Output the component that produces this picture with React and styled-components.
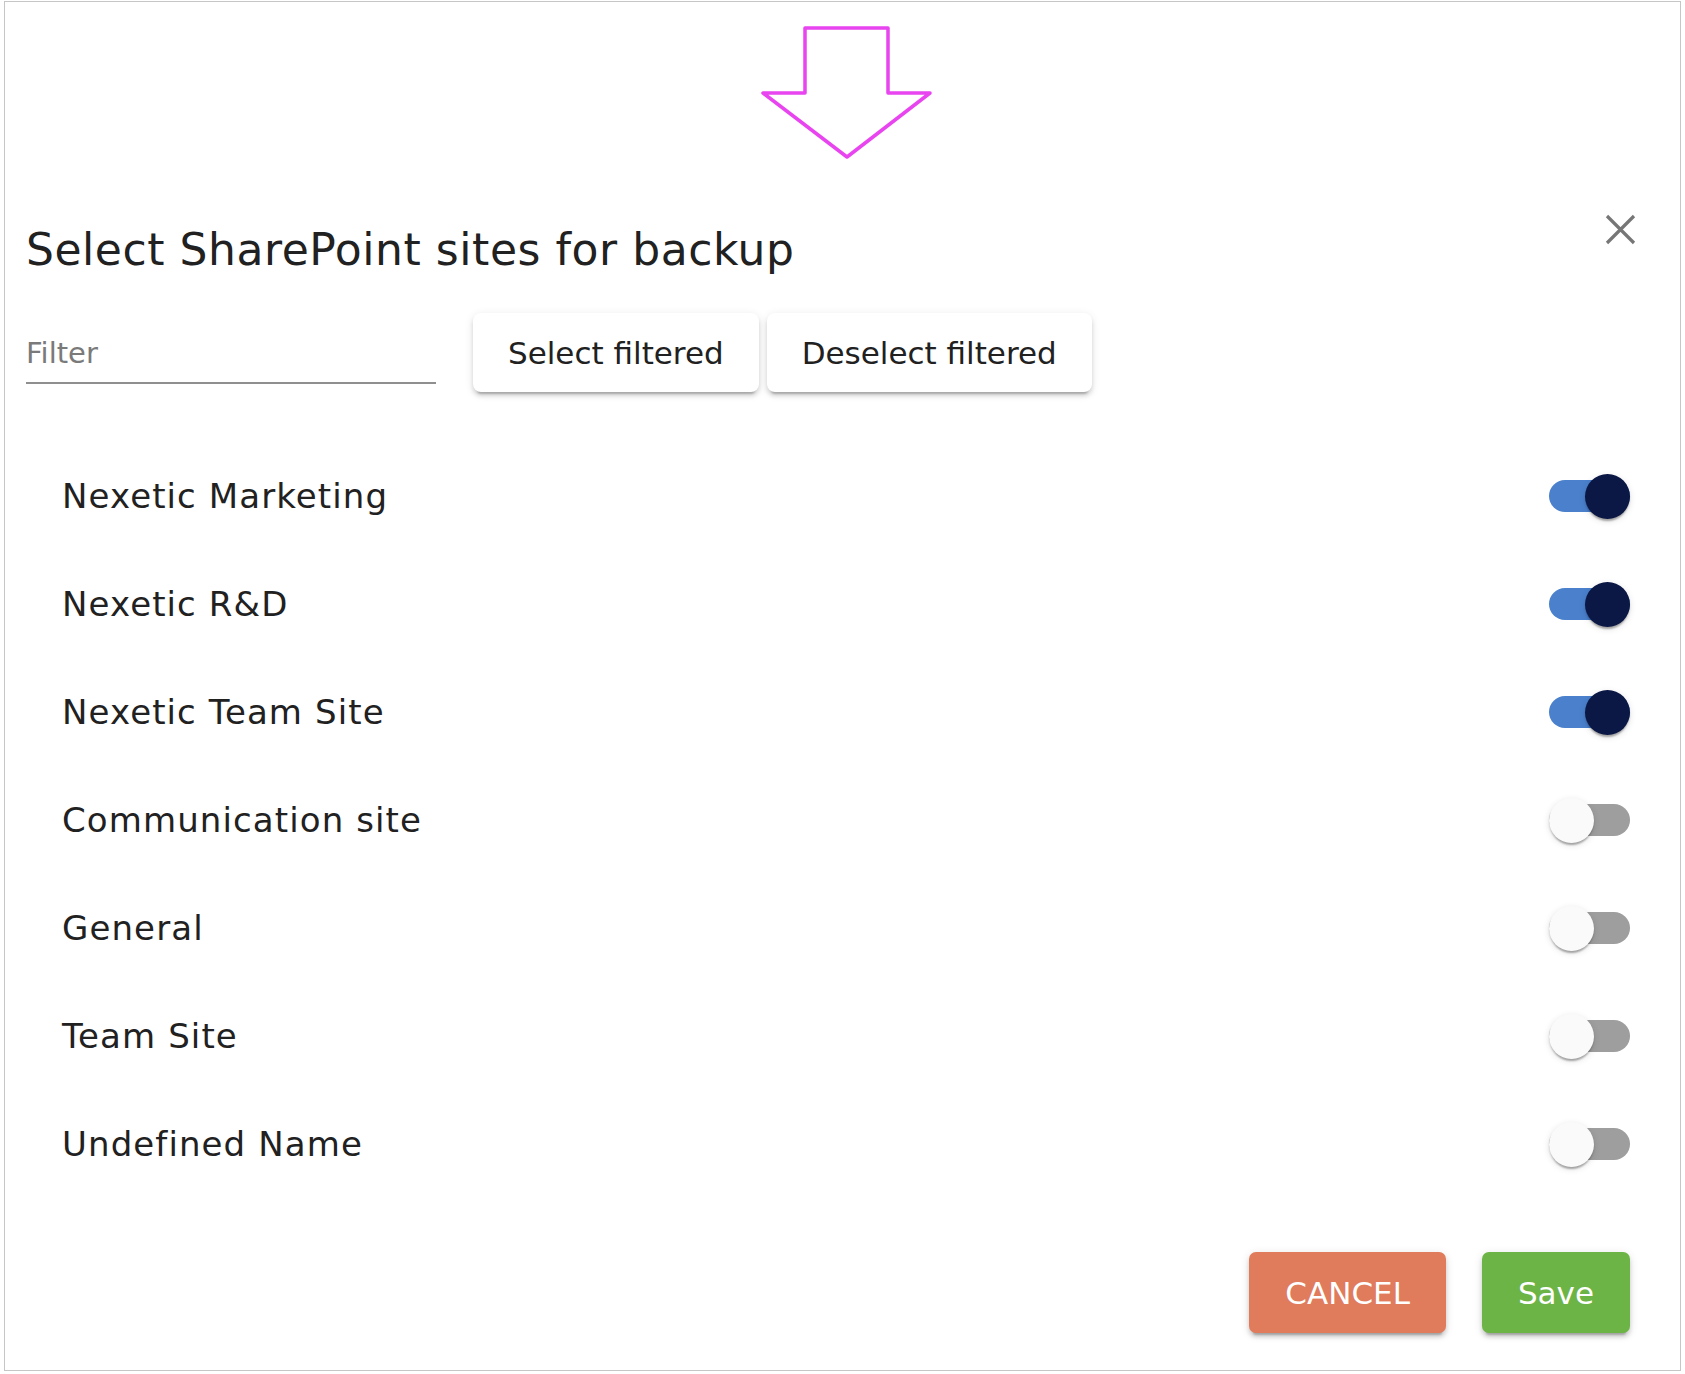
import React from "react";
import styled, { createGlobalStyle } from "styled-components";

const Global = createGlobalStyle`
  html, body { margin: 0; padding: 0; background: #ffffff; }
  body {
    font-family: "DejaVu Sans", "Liberation Sans", sans-serif;
    color: #212121;
  }
  * { box-sizing: border-box; }
`;

const Frame = styled.div`
  margin: 1px 0 0 4px;
  width: 1677px;
  height: 1370px;
  border: 1px solid #c6c6c6;
  display: flex;
  flex-direction: column;
  padding: 0 50px 37px 21px;
`;

const ArrowBar = styled.div`
  height: 212px;
  flex: none;
  display: flex;
  align-items: flex-start;
  padding: 21px 0 0 731px;
`;

const Header = styled.div`
  display: flex;
  justify-content: space-between;
  align-items: flex-start;
  flex: none;
`;

const Title = styled.h1`
  margin: 0;
  padding-top: 10px;
  font-size: 44px;
  line-height: 52px;
  font-weight: 400;
  letter-spacing: 0.55px;
  color: #212121;
`;

const CloseButton = styled.button`
  border: none;
  background: transparent;
  padding: 0;
  margin: 0 -6px 0 0;
  width: 31px;
  height: 31px;
  display: flex;
  cursor: pointer;
`;

const FilterRow = styled.div`
  margin-top: 37px;
  display: flex;
  align-items: flex-start;
  flex: none;
`;

const FilterInput = styled.input`
  box-sizing: content-box;
  width: 410px;
  height: 36px;
  padding: 22px 0 11px;
  margin: 0 37px 0 0;
  border: none;
  border-bottom: 2px solid #8f8f8f;
  outline: none;
  background: transparent;
  font-family: "DejaVu Sans", "Liberation Sans", sans-serif;
  font-size: 29px;
  line-height: 36px;
  color: #212121;
  &::placeholder {
    color: #7a7a7a;
    opacity: 1;
  }
`;

const ButtonGroup = styled.div`
  display: flex;
  gap: 8px;
`;

const PlainButton = styled.button`
  height: 79px;
  padding: 0 35px;
  border: none;
  border-radius: 8px;
  background: #ffffff;
  font-family: "DejaVu Sans", "Liberation Sans", sans-serif;
  font-size: 31px;
  color: #212121;
  cursor: pointer;
  box-shadow: 0 6px 2px -4px rgba(0, 0, 0, 0.2), 0 4px 4px 0 rgba(0, 0, 0, 0.12),
    0 2px 10px 0 rgba(0, 0, 0, 0.1);
`;

const SiteList = styled.ul`
  list-style: none;
  margin: 50px 0 0;
  padding: 0;
  flex: none;
`;

const SiteRow = styled.li`
  height: 108px;
  display: flex;
  align-items: center;
  justify-content: space-between;
  padding-left: 36px;
`;

const SiteName = styled.span`
  font-size: 34px;
  line-height: 40px;
  letter-spacing: 1.1px;
  color: #212121;
`;

const Switch = styled.span`
  position: relative;
  flex: none;
  width: 81px;
  height: 45px;
  display: inline-flex;
  align-items: center;
`;

const Track = styled.span`
  width: 100%;
  height: 32px;
  border-radius: 16px;
  background: ${(p) => (p.$on ? "#4a80cc" : "#9e9e9e")};
`;

const Thumb = styled.span`
  position: absolute;
  top: 0;
  left: ${(p) => (p.$on ? "36px" : "0")};
  width: 45px;
  height: 45px;
  border-radius: 50%;
  background: ${(p) => (p.$on ? "#0b1744" : "#fafafa")};
  box-shadow: 0 4px 2px -2px rgba(0, 0, 0, 0.2), 0 2px 2px 0 rgba(0, 0, 0, 0.14),
    0 2px 7px 0 rgba(0, 0, 0, 0.12);
`;

const Footer = styled.div`
  margin-top: auto;
  display: flex;
  justify-content: flex-end;
  gap: 36px;
  flex: none;
`;

const ActionButton = styled.button`
  height: 81px;
  padding: 0 36px;
  border: none;
  border-radius: 7px;
  background: ${(p) => p.$bg};
  color: #ffffff;
  font-family: "DejaVu Sans", "Liberation Sans", sans-serif;
  font-size: 31px;
  cursor: pointer;
  box-shadow: 0 6px 2px -4px rgba(0, 0, 0, 0.2), 0 4px 4px 0 rgba(0, 0, 0, 0.14),
    0 2px 10px 0 rgba(0, 0, 0, 0.12);
`;

const sites = [
  { name: "Nexetic Marketing", on: true },
  { name: "Nexetic R&D", on: true },
  { name: "Nexetic Team Site", on: true },
  { name: "Communication site", on: false },
  { name: "General", on: false },
  { name: "Team Site", on: false },
  { name: "Undefined Name", on: false },
];

function DownArrow() {
  return (
    <svg width="180" height="140" viewBox="0 0 180 140" aria-hidden="true">
      <polygon
        points="48,5 131,5 131,70 173,70 90,134 6,70 48,70"
        fill="none"
        stroke="#e844ef"
        strokeWidth="3.5"
        strokeLinejoin="round"
      />
    </svg>
  );
}

function CloseIcon() {
  return (
    <svg width="31" height="31" viewBox="0 0 31 31" aria-hidden="true">
      <path d="M2 2 L29 29 M29 2 L2 29" stroke="#767676" strokeWidth="3.2" />
    </svg>
  );
}

export default function App() {
  return (
    <>
      <Global />
      <Frame>
        <ArrowBar>
          <DownArrow />
        </ArrowBar>
        <Header>
          <Title>Select SharePoint sites for backup</Title>
          <CloseButton aria-label="close">
            <CloseIcon />
          </CloseButton>
        </Header>
        <FilterRow>
          <FilterInput placeholder="Filter" />
          <ButtonGroup>
            <PlainButton>Select filtered</PlainButton>
            <PlainButton>Deselect filtered</PlainButton>
          </ButtonGroup>
        </FilterRow>
        <SiteList>
          {sites.map((s) => (
            <SiteRow key={s.name}>
              <SiteName>{s.name}</SiteName>
              <Switch>
                <Track $on={s.on} />
                <Thumb $on={s.on} />
              </Switch>
            </SiteRow>
          ))}
        </SiteList>
        <Footer>
          <ActionButton $bg="#e07b5c">CANCEL</ActionButton>
          <ActionButton $bg="#6cb445">Save</ActionButton>
        </Footer>
      </Frame>
    </>
  );
}
